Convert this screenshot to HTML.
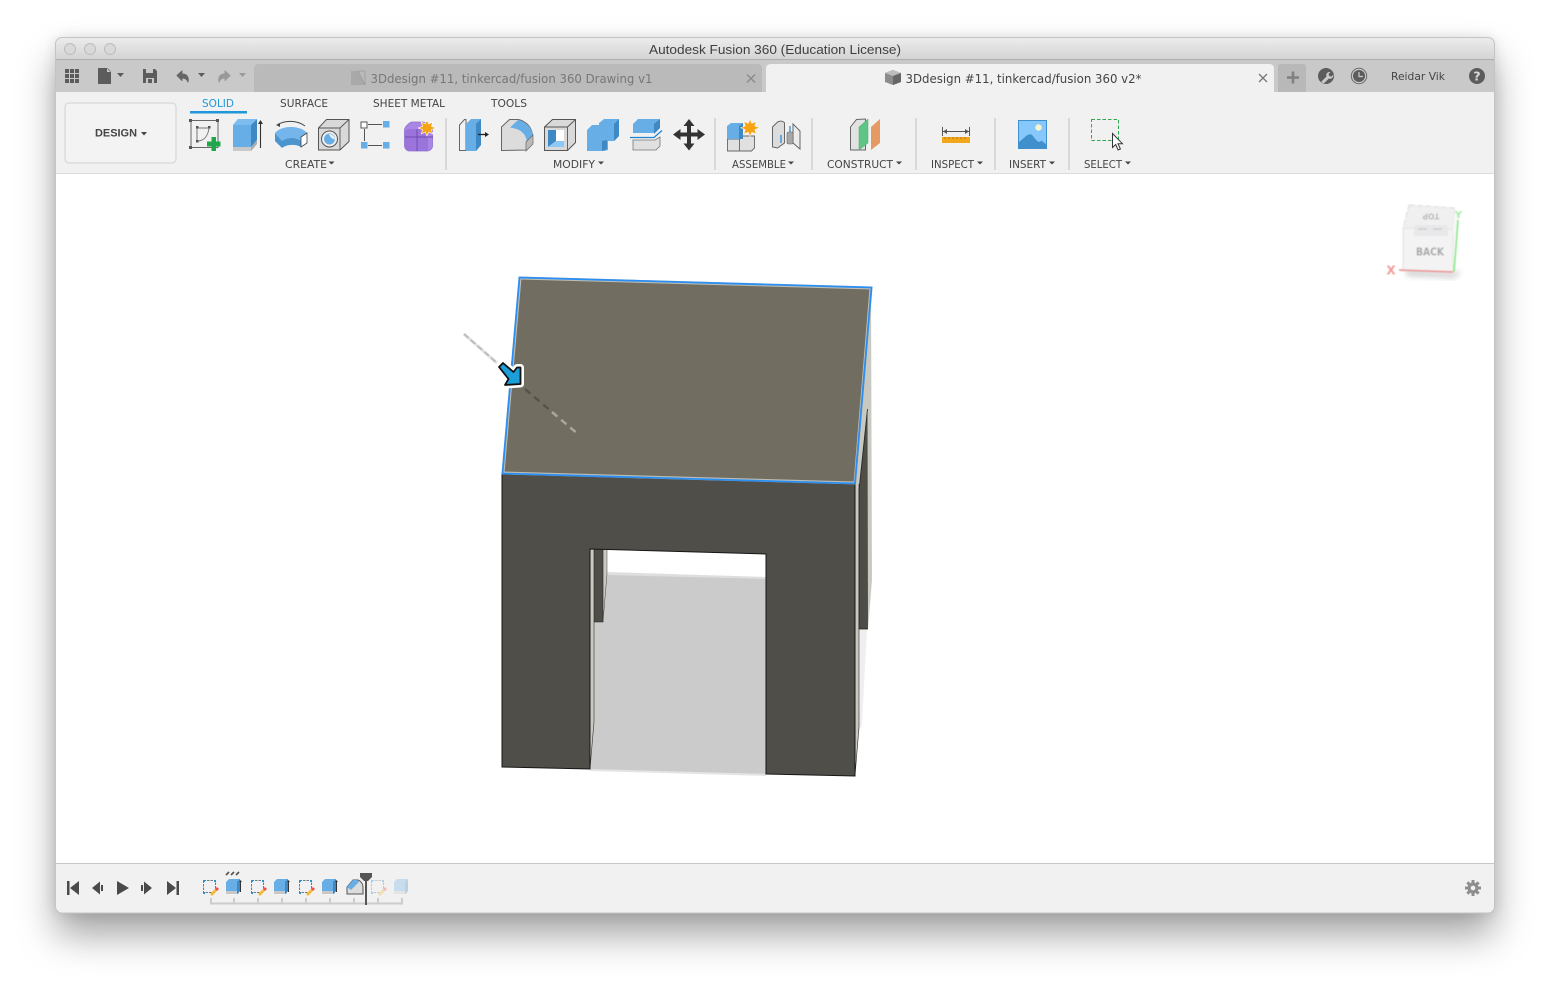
<!DOCTYPE html>
<html><head><meta charset="utf-8"><style>
html,body{margin:0;padding:0;background:#fff;width:1550px;height:987px;overflow:hidden}
#win{position:absolute;left:56px;top:38px;width:1438px;height:875px;border-radius:6px;box-shadow:0 22px 38px rgba(0,0,0,.36),0 0 14px rgba(0,0,0,.12);background:#fff}
svg{position:absolute;left:0;top:0}
text{font-family:"DejaVu Sans","Liberation Sans",sans-serif;fill:#444}
.l{font-size:10.5px}
</style></head><body>
<div id="win"></div>
<svg width="1550" height="987" viewBox="0 0 1550 987">
<defs>
<linearGradient id="tb" x1="0" y1="0" x2="0" y2="1"><stop offset="0" stop-color="#ececec"/><stop offset="1" stop-color="#d3d3d3"/></linearGradient>
<clipPath id="wc"><rect x="56" y="38" width="1438" height="875" rx="6"/></clipPath>
<filter id="soft" x="-20%" y="-20%" width="140%" height="140%"><feGaussianBlur stdDeviation=".4"/></filter>
<filter id="sh" x="-30%" y="-30%" width="160%" height="160%"><feGaussianBlur stdDeviation="3"/></filter>
</defs>
<g clip-path="url(#wc)">
<rect x="56" y="38" width="1438" height="22" fill="url(#tb)"/>
<rect x="56" y="59" width="1438" height="1" fill="#aeaeae"/>
<rect x="56" y="60" width="1438" height="32" fill="#c9c9c9"/>
<rect x="56" y="92" width="1438" height="81" fill="#f1f1f1"/>
<rect x="56" y="173" width="1438" height="1" fill="#dcdcdc"/>
<rect x="56" y="174" width="1438" height="689" fill="#fff"/>
<rect x="56" y="863" width="1438" height="1" fill="#c8c8c8"/>
<rect x="56" y="864" width="1438" height="49" fill="#f1f1f1"/>
</g>
<rect x="55.5" y="37.500" width="1439" height="875.500" rx="6.500" fill="none" stroke="#c4c4c4"/>

<!-- traffic lights -->
<g fill="#d9d9d9" stroke="#bdbdbd" stroke-width="1"><circle cx="70" cy="49" r="5.500"/><circle cx="90" cy="49" r="5.500"/><circle cx="110" cy="49" r="5.500"/></g>
<text x="649" y="54" font-size="13" textLength="252" lengthAdjust="spacingAndGlyphs" style="font-family:'Liberation Sans',sans-serif;fill:#404040">Autodesk Fusion 360 (Education License)</text>

<!-- app bar icons -->
<g fill="#5c5c5c">
<rect x="65" y="69" width="4" height="4"/><rect x="70" y="69" width="4" height="4"/><rect x="75" y="69" width="4" height="4"/>
<rect x="65" y="74" width="4" height="4"/><rect x="70" y="74" width="4" height="4"/><rect x="75" y="74" width="4" height="4"/>
<rect x="65" y="79" width="4" height="4"/><rect x="70" y="79" width="4" height="4"/><rect x="75" y="79" width="4" height="4"/>
<path d="M98 68h9l4 4v12H98z"/>
<path d="M117 73h7l-3.500 4z"/>
<path d="M143 69h12l2 2v12h-14z"/>
<path d="M198 73h7l-3.500 4z"/>
</g>
<path d="M107 68v4h4z" fill="#c9c9c9"/><path d="M107.500 68.500l3 3" stroke="#5c5c5c" stroke-width=".6"/>
<path d="M146 69h7v4h-7z" fill="#c9c9c9"/><path d="M146 78h8v5h-8z" fill="#c9c9c9"/><rect x="148" y="79" width="4" height="4" fill="#5c5c5c"/>
<path d="M177 75.500l5-4.500v3c5 0 7 3 6 8-1-3-3-4-6-4v2.500z" fill="#666" stroke="#666" stroke-width="1" stroke-linejoin="round"/>
<path d="M230 75.500l-5-4.500v3c-5 0-7 3-6 8 1-3 3-4 6-4v2.500z" fill="#999" stroke="#999" stroke-width="1" stroke-linejoin="round"/>
<path d="M239 73h7l-3.500 4z" fill="#999"/>

<!-- tabs -->
<path d="M254 92V69q0-5 5-5H757q5 0 5 5V92z" fill="#bababa"/>
<path d="M766 92V69q0-5 5-5H1269q5 0 5 5V92z" fill="#f1f1f1"/>
<path d="M351 71h14v14h-14z" fill="#a9a9a9"/><path d="M358 71h7v14l-7-14z" fill="#bababa" stroke="#9a9a9a" stroke-width=".8"/>
<text x="370.500" y="83" font-size="12" textLength="282" lengthAdjust="spacingAndGlyphs" style="fill:#777">3Ddesign #11, tinkercad/fusion 360 Drawing v1</text>
<path d="M747 74.500l8 8M755 74.500l-8 8" stroke="#8a8a8a" stroke-width="1.300"/>
<path d="M885 73l8-3 8 3v9l-8 3-8-3z" fill="#8c8c8c"/><path d="M885 73l8 3 8-3-8-3z" fill="#bdbdbd"/><path d="M893 76v9l8-3v-9z" fill="#666"/>
<text x="905.500" y="83" font-size="12" textLength="236" lengthAdjust="spacingAndGlyphs" style="fill:#444">3Ddesign #11, tinkercad/fusion 360 v2*</text>
<path d="M1259 74l8 8M1267 74l-8 8" stroke="#777" stroke-width="1.300"/>
<path d="M1278 92V67q0-3 3-3H1303q3 0 3 3V92z" fill="#b8b8b8"/>
<path d="M1287 77.500h12M1293 71.500v12" stroke="#808080" stroke-width="2.600"/>
<circle cx="1326" cy="76" r="8" fill="#5c5c5c"/><path d="M1321 82l5.500-5.500c-1-2.500 1-5 4-4.500l-2 2 .8 2 2 .6 2-2c.4 2.800-2 5-4.500 4l-4.800 4.800z" fill="#c9c9c9"/>
<circle cx="1359" cy="76" r="7.700" fill="none" stroke="#6a6a6a"/><circle cx="1359" cy="76" r="6" fill="#5c5c5c"/><path d="M1359 72v4.500h4" fill="none" stroke="#c9c9c9" stroke-width="1.200"/>
<text x="1391" y="80" font-size="11" textLength="54" lengthAdjust="spacingAndGlyphs" style="fill:#444">Reidar Vik</text>
<circle cx="1477" cy="76" r="8" fill="#5c5c5c"/>
<text x="1477" y="80.500" font-size="12.500" text-anchor="middle" font-weight="bold" style="fill:#ddd">?</text>

<!-- design box -->
<rect x="65" y="103" width="111" height="60" rx="4" fill="#f3f3f3" stroke="#dcdcdc" stroke-width="1.500"/>
<text x="95" y="136.500" class="l" font-weight="bold" textLength="42" lengthAdjust="spacingAndGlyphs" style="font-family:'Liberation Sans',sans-serif;font-size:11px;fill:#444">DESIGN</text>
<path d="M141 132h6l-3 3.500z" fill="#444"/>

<!-- ribbon tabs -->
<text x="202" y="107" class="l" textLength="32" lengthAdjust="spacingAndGlyphs" style="fill:#1f97d8">SOLID</text>
<rect x="190" y="111" width="57" height="2.500" fill="#1f97d8"/>
<text x="280" y="107" class="l" textLength="48" lengthAdjust="spacingAndGlyphs">SURFACE</text>
<text x="373" y="107" class="l" textLength="72" lengthAdjust="spacingAndGlyphs">SHEET METAL</text>
<text x="491" y="107" class="l" textLength="36" lengthAdjust="spacingAndGlyphs">TOOLS</text>

<!-- separators -->
<g fill="#d8d8d8"><rect x="445" y="118" width="2" height="52"/><rect x="714" y="118" width="2" height="52"/><rect x="811" y="118" width="2" height="52"/><rect x="915" y="118" width="2" height="52"/><rect x="994" y="118" width="2" height="52"/><rect x="1068" y="118" width="2" height="52"/></g>

<!-- group labels -->
<g>
<text x="285" y="168" class="l" textLength="42" lengthAdjust="spacingAndGlyphs">CREATE</text><path d="M328.500 161.500h6l-3 3z" fill="#444"/>
<text x="553" y="168" class="l" textLength="42" lengthAdjust="spacingAndGlyphs">MODIFY</text><path d="M598 161.500h6l-3 3z" fill="#444"/>
<text x="732" y="168" class="l" textLength="54" lengthAdjust="spacingAndGlyphs">ASSEMBLE</text><path d="M788 161.500h6l-3 3z" fill="#444"/>
<text x="827" y="168" class="l" textLength="66" lengthAdjust="spacingAndGlyphs">CONSTRUCT</text><path d="M896 161.500h6l-3 3z" fill="#444"/>
<text x="931" y="168" class="l" textLength="43" lengthAdjust="spacingAndGlyphs">INSPECT</text><path d="M977 161.500h6l-3 3z" fill="#444"/>
<text x="1009" y="168" class="l" textLength="37" lengthAdjust="spacingAndGlyphs">INSERT</text><path d="M1049 161.500h6l-3 3z" fill="#444"/>
<text x="1084" y="168" class="l" textLength="38" lengthAdjust="spacingAndGlyphs">SELECT</text><path d="M1125 161.500h6l-3 3z" fill="#444"/>
</g>

<!-- CREATE icons -->
<rect x="191" y="120.500" width="27" height="27" fill="none" stroke="#666"/>
<g fill="#555"><rect x="189" y="119" width="3" height="3"/><rect x="216" y="119" width="3" height="3"/><rect x="189" y="146" width="3" height="3"/></g>
<path d="M197 141v-13h12M197 141c7 0 11-5 12-13" fill="none" stroke="#777"/>
<g fill="#555"><rect x="196" y="126" width="2.500" height="2.500"/><rect x="208" y="126" width="2.500" height="2.500"/><rect x="196" y="140" width="2.500" height="2.500"/></g>
<path d="M207 137.500h7v0M211.500 137h4.500v4.500h4.500v5h-4.500V151h-4.500v-4.500H207v-5h4.500z" fill="#1fa84a"/>

<path d="M233 147v-22l5-6h14l-1 6v22z" fill="#68aee6"/><path d="M238 119h19l-6 6h-18z" fill="#7dbcef"/><path d="M251 125l6-6v21l-6 7z" fill="#3e88c4"/><path d="M233 147h18v4h-18z" fill="#c9c9c9"/><path d="M251 147l6-7v4l-6 7z" fill="#aaa"/>
<path d="M260.500 148v-26" stroke="#333" stroke-width="1.100"/><path d="M258 124l2.500-4 2.500 4z" fill="#333"/>

<path d="M275 133c6-8 26-8 32 0l-6 8c-5-4-14-4-19 0z" fill="#74b6ec"/><path d="M275 133v8l7 7c5-4 14-4 19-1v-6c-5-4-14-4-19 0z" fill="#4a94d0"/><path d="M301 137l6-4v10l-6 4z" fill="#fff" stroke="#444" stroke-width=".8"/>
<path d="M277 125c8-5 20-5 28 1" fill="none" stroke="#444"/><path d="M276 125l4-2v4z" fill="#444"/>

<path d="M318.500 128l8-8.500h22.500v22l-9 8.500h-21.500z" fill="#d9d9d9" stroke="#555"/><path d="M318.500 128h21.500v22M340 128l9-8.500" fill="none" stroke="#555" stroke-width=".9"/><circle cx="329.500" cy="139" r="8" fill="#eee" stroke="#555"/><circle cx="329.500" cy="139" r="5.500" fill="#68aee6"/><path d="M329 134c1 3 3 5 6 5.500a6 6 0 0 0-6-5.500z" fill="#eee"/>

<rect x="361" y="122" width="6" height="6" fill="#fff" stroke="#555"/>
<rect x="383" y="121" width="6.500" height="6.500" fill="#68aee6"/><rect x="361" y="142" width="6.500" height="6.500" fill="#68aee6"/><rect x="383" y="142" width="6.500" height="6.500" fill="#68aee6"/>
<path d="M368 124.500h14M364.500 129v12M368 145.500h14" stroke="#555"/>

<path d="M404.500 130c0-3 5-8 8-8h10c3 0 10 5 10 8v16c0 3-3 5-5 5h-18c-3 0-5-3-5-5z" fill="#a985e4" stroke="#8f6ed0" stroke-width=".8"/>
<path d="M409 129h17c2 0 2 1 2 3v16c0 2-1 3-3 3h-16c-2 0-4-2-4-4v-14c0-2 2-4 4-4z" fill="#9a74da"/>
<path d="M405 137h28M417 129v22" stroke="#6d4bb0" stroke-width=".9"/>
<path d="M427 120l1.800 4 4-2-1.400 4.300 4.400 1.700-4.400 1.700 1.400 4.300-4-2-1.800 4-1.800-4-4 2 1.400-4.300-4.400-1.700 4.400-1.700-1.400-4.300 4 2z" fill="#f7a414" stroke="#fff" stroke-width=".6"/>

<!-- MODIFY icons -->
<path d="M459.500 150.500V125l5-5.500H466v31z" fill="#f3f3f3" stroke="#666"/><path d="M466 124l5-5h10v26l-5 6h-10z" fill="#68aee6"/><path d="M476 124l5-5v26l-5 6z" fill="#3e88c4"/>
<path d="M478 134.500h8" stroke="#222" stroke-width="1.300"/><path d="M485 132l4 2.500-4 2.500z" fill="#222"/>

<path d="M501.500 150.500V127l8-7.500h9c8 2 13 8 14 15l-6 7v8.500z" fill="#dcdcdc" stroke="#666"/><path d="M518 120c8 1.500 14 8 15 15l-6 7c-1-8-6-13-17-14.500z" fill="#68aee6"/><path d="M526 142l7-7v9l-7 7z" fill="#bbb" stroke="#666" stroke-width=".7"/>

<path d="M544.500 127l8-7.500h23v23l-8 8h-23z" fill="#d9d9d9" stroke="#555"/><rect x="548" y="130" width="16" height="17" fill="#fff"/><path d="M548 130h8v11l-8 6z" fill="#3e88c4"/><path d="M548 147l8-6h8v6z" fill="#8cc8f8"/><path d="M544.500 127h23v23M567.500 127l8-7.500" fill="none" stroke="#555" stroke-width=".9"/>

<path d="M587 130l5-5h7v-2l5-4h15v17l-5 5h-6v9l-4 1h-17z" fill="#68aee6"/><path d="M614 124l5-5v17l-5 5zM602 141l5-1v9l-5 2z" fill="#3e88c4"/>

<path d="M633 133v-9l5-5h22l-5 5v9z" fill="#68aee6"/><path d="M654 124l6-5v9l-6 6z" fill="#3e88c4"/><path d="M633 140h22l5-3v9l-4 4h-23z" fill="#e0e0e0" stroke="#777" stroke-width=".8"/>
<path d="M630 137.500h24l8-7" fill="none" stroke="#1f84d2" stroke-width="1.300"/>

<path d="M689 119l5.500 7H691v6.500h6.500V129l7.500 5.500-7.500 5.500v-3.500H691v7h3.500l-5.500 7-5.500-7h3.500v-7h-6.500v3.500l-7.500-5.500 7.500-5.500v3.500h6.500V126h-3.500z" fill="#333"/>

<!-- ASSEMBLE icons -->
<path d="M727.500 139v12h12v-12zM739.500 139v12h12l3-3v-12h-12z" fill="#e0e0e0" stroke="#666" stroke-width=".9"/>
<path d="M727 139v-13l4-3h12v16z" fill="#68aee6"/><path d="M739 126l4-3v16h-4z" fill="#3e88c4"/>
<path d="M750 119l1.800 4.500 4.400-2-1.500 4.500 4.800 1.800-4.800 1.800 1.500 4.500-4.400-2-1.800 4.500-1.800-4.500-4.400 2 1.500-4.500-4.800-1.800 4.800-1.800-1.500-4.500 4.400 2z" fill="#f7a414" stroke="#fff" stroke-width=".5"/>
<path d="M772.500 147v-20l5-5c3-1.500 6-1 7 1v20l-7 5z" fill="#dcdcdc" stroke="#666"/><path d="M793 124l7 7v18l-7-6z" fill="#ececec" stroke="#666"/><rect x="787" y="132" width="6" height="12" rx="1.500" fill="#a8a8a8" stroke="#666" stroke-width=".6"/>
<path d="M790 126v6M781 135v8" stroke="#1f84d2" stroke-width="1.200"/>

<!-- CONSTRUCT -->
<path d="M850.500 127l6-7.500 9-.5v31h-15z" fill="#e2e2e2" stroke="#666"/><path d="M859 150v-23l9-8v24z" fill="#5fc585" stroke="#4fa870" stroke-width=".5"/><path d="M871 150v-23l9-8v24z" fill="#e59a66"/>

<!-- INSPECT -->
<path d="M942.500 127v9M969.500 127v9M943 131.500h26" stroke="#555"/><path d="M943 131.500l4-2.500v5zM969 131.500l-4-2.500v5z" fill="#555"/>
<rect x="942" y="137" width="28" height="6" fill="#f2a71b"/>
<path d="M945 137v2M949 137v2M953 137v2M957 137v2M961 137v2M965 137v2" stroke="#9a6c10" stroke-width=".7"/>

<!-- INSERT -->
<rect x="1018.500" y="120.500" width="28" height="28" fill="#86c8fb" stroke="#3f90cc"/>
<circle cx="1038.500" cy="127.500" r="3.200" fill="#f6f3cf"/>
<path d="M1019 142l6-5c3-3 6-4 8-1 2 3 4 5 6 6 2-1 3-2 4 0l3 2v5h-27z" fill="#3f90cc"/>

<!-- SELECT -->
<rect x="1091.500" y="119.500" width="27" height="21" fill="none" stroke="#2fa84e" stroke-dasharray="3.500 2"/>
<path d="M1112.500 133.500v14l3.200-3 2.400 5.500 2.300-1-2.400-5.300h4.400z" fill="#fff" stroke="#333"/>

<!-- viewcube -->
<path d="M1405 270l50 3 4-4v6l-6 3-46-2z" fill="#cfcfcf" filter="url(#sh)"/>
<g filter="url(#soft)">
<path d="M1409 205l46 3-2 21-50-1z" fill="#f0f0f0" stroke="#dcdcdc" stroke-dasharray="6 2"/>
<path d="M1403 228l50 1v43l-50-2z" fill="#f3f3f3" stroke="#e4e4e4"/>
<path d="M1453 229l2-21 4 10-4 54z" fill="#f7f7f7"/>
<rect x="1414" y="225" width="34" height="11" fill="#e8e8ea"/>
<path d="M1418 229h9M1433 229h9" stroke="#c8c8c8" stroke-width="1.200"/>
<text x="1430" y="255.500" font-size="10.500" font-weight="bold" text-anchor="middle" textLength="28" lengthAdjust="spacingAndGlyphs" style="fill:#a8a8a8">BACK</text>
<text transform="translate(1431,213.500) rotate(180)" font-size="7.500" font-weight="bold" text-anchor="middle" style="fill:#bbb">TOP</text>
<path d="M1399 270l54 2" stroke="#ec9a9a" stroke-width="1.700"/>
<path d="M1454 272l4-52" stroke="#8fea8f" stroke-width="1.700"/>
<text x="1391" y="274.500" font-size="12" font-weight="bold" text-anchor="middle" style="fill:#f49a9a">X</text>
<text x="1458.500" y="218" font-size="10" font-weight="bold" text-anchor="middle" style="fill:#a8eca8">Y</text>
</g>

<!-- MODEL -->
<!-- ground floor through opening -->
<path d="M607 574L766 578V774L590 770L594 722V622H603Z" fill="#cbcbcb"/>
<path d="M607 572L766 577V579L607 575Z" fill="#dedede"/>
<path d="M590 769L766 774V776L590 771Z" fill="#e4e4e4"/>
<!-- right soft shadow -->
<path d="M859 629h8l-5 95-3 8z" fill="#efefef"/>
<!-- right side -->
<path d="M871 288L872 580L868 629H859V727L855 776V484Z" fill="#c9c9c1"/>
<path d="M867.500 409L868 629H859V490Z" fill="#4e4d47"/>
<path d="M867.500 409L859 490V629H868" fill="none" stroke="#222" stroke-width=".8"/>
<path d="M855 776L859 727V484" fill="none" stroke="#2a2a2a" stroke-width=".6"/>
<!-- inner left -->
<path d="M590 549H607V574L603 622H594V722L590 769Z" fill="#c9c9c1"/>
<path d="M594 549H603V622H594Z" fill="#4e4d47" stroke="#222" stroke-width=".6"/>
<path d="M607 549V574L603 622" fill="none" stroke="#444" stroke-width=".5"/>
<path d="M594 622V722L590 769" fill="none" stroke="#333" stroke-width=".6"/>
<!-- front -->
<path d="M502 474L855 484V776L766 774V554L590 549V769L502 767Z" fill="#4f4e48" stroke="#161616" stroke-width="1"/>
<!-- top -->
<path d="M520 278L871 288L855 483L503 473Z" fill="#716d60" stroke="#bdbdb5" stroke-width="3"/>
<path d="M519.500 277.500L871.500 287.500L855 483.500L502.500 473.500Z" fill="none" stroke="#2a8ef2" stroke-width="1.800"/>
<!-- direction line -->
<path d="M464 334L497 363" stroke="#e2e2e2" stroke-width="3"/>
<path d="M464 334L497 363" stroke="#bdbdbd" stroke-width="2" stroke-dasharray="6 3"/>
<path d="M525 389L552 412" stroke="#55534a" stroke-width="2.500" stroke-dasharray="7 5"/>
<path d="M552 412L579 435" stroke="#a9a79e" stroke-width="2.500" stroke-dasharray="7 5"/>
<!-- arrow -->
<path d="M499 367L503 363L513.500 372L517 367.500L520.500 367.500L520.500 384L505 385L508.500 379Z" fill="#fff" stroke="#fff" stroke-width="7" stroke-linejoin="round"/>
<path d="M519.500 277.500L502.500 473.500" fill="none" stroke="#2a8ef2" stroke-width="1.800" opacity="0"/>
<path d="M499 367L503 363L513.500 372L517 367.500L520.500 367.500L520.500 384L505 385L508.500 379Z" fill="#1c9fd8" stroke="#111" stroke-width="1.800" stroke-linejoin="round"/>

<!-- TIMELINE -->
<g fill="#4a4a4a">
<rect x="67" y="881" width="2.500" height="14"/><path d="M70 888l9-7v14z"/>
<path d="M92 888l8-6.500v13zM101 885h2v6h-2z"/>
<path d="M117 881l12 7-12 7z"/>
<path d="M141 885h2v6h-2zM144 881.500l8 6.500-8 6.500z"/>
<path d="M167 881l9 7-9 7zM176.500 881h2.500v14h-2.500z"/>
</g>
<!-- timeline track -->
<path d="M210 903.500H403" stroke="#cccccc" stroke-width="2"/>
<path d="M211 898v5M234 898v5M258 898v5M282 898v5M306 898v5M330 898v5M354 898v5M378 898v5M402 898v5" stroke="#cccccc" stroke-width="2"/>
<!-- sketch ops -->
<g id="tl">
<rect x="203.500" y="880.500" width="12" height="12" fill="none" stroke="#777" stroke-dasharray="2.500 1"/>
<path d="M203 880h2v2h-2zM214 880h2v2h-2zM203 892h2v2h-2z" fill="#1f97e0"/>
<path d="M210 894l5-5 2 2-5 5z" fill="#f5b93d"/><path d="M215 889l2-2 2 2-2 2z" fill="#f05050"/>
</g>
<path d="M226 882l3-3h11v12l-2 3h-12z" fill="#68aee6"/><path d="M237 882l3-3v12l-3 3z" fill="#3e88c4"/><path d="M226 891h11v3h-11z" fill="#c8c8c8"/>
<path d="M240.500 892v-11" stroke="#333"/><path d="M239 882l1.500-2 1.500 2z" fill="#333"/>
<path d="M226 875l3-3M231 875l3-3M236 875l3-3" stroke="#555" stroke-width="1.700"/>
<use href="#tl" x="48"/>
<use href="#tl" x="96"/>
<path d="M274 882l3-3h11v12l-2 3h-12z" fill="#68aee6"/><path d="M285 882l3-3v12l-3 3z" fill="#3e88c4"/><path d="M274 891h11v3h-11z" fill="#c8c8c8"/><path d="M288.500 892v-11" stroke="#333"/><path d="M287 882l1.500-2 1.500 2z" fill="#333"/>
<path d="M322 882l3-3h11v12l-2 3h-12z" fill="#68aee6"/><path d="M333 882l3-3v12l-3 3z" fill="#3e88c4"/><path d="M322 891h11v3h-11z" fill="#c8c8c8"/><path d="M336.500 892v-11" stroke="#333"/><path d="M335 882l1.500-2 1.500 2z" fill="#333"/>
<!-- fillet -->
<path d="M347 894v-7l6-7h5c3 1 5 4 5 7v7z" fill="#dcdcdc" stroke="#555"/><path d="M353 880l-6 7 4 3 8-8-2-2z" fill="#68aee6"/>
<!-- marker -->
<path d="M360 873h12v4l-4 4h-4l-4-4z" fill="#555"/><rect x="365" y="878" width="2" height="27" fill="#555"/>
<!-- rolled back -->
<g opacity=".35"><use href="#tl" x="168"/></g>
<g opacity=".3"><path d="M394 882l3-3h11v12l-2 3h-12z" fill="#68aee6"/><path d="M405 882l3-3v12l-3 3z" fill="#3e88c4"/><path d="M394 891h11v3h-11z" fill="#c8c8c8"/></g>
<!-- gear -->
<g transform="translate(1473,888)"><circle r="5.500" fill="#8e8e8e"/><circle r="2.300" fill="#f1f1f1"/><path d="M-1.500-8h3v3h-3zM-1.500 5h3v3h-3zM-8-1.500h3v3h-3zM5-1.500h3v3H5z" fill="#8e8e8e"/><path d="M-1.500-8h3v3h-3zM-1.500 5h3v3h-3zM-8-1.500h3v3h-3zM5-1.500h3v3H5z" fill="#8e8e8e" transform="rotate(45)"/></g>
</svg>
</body></html>
